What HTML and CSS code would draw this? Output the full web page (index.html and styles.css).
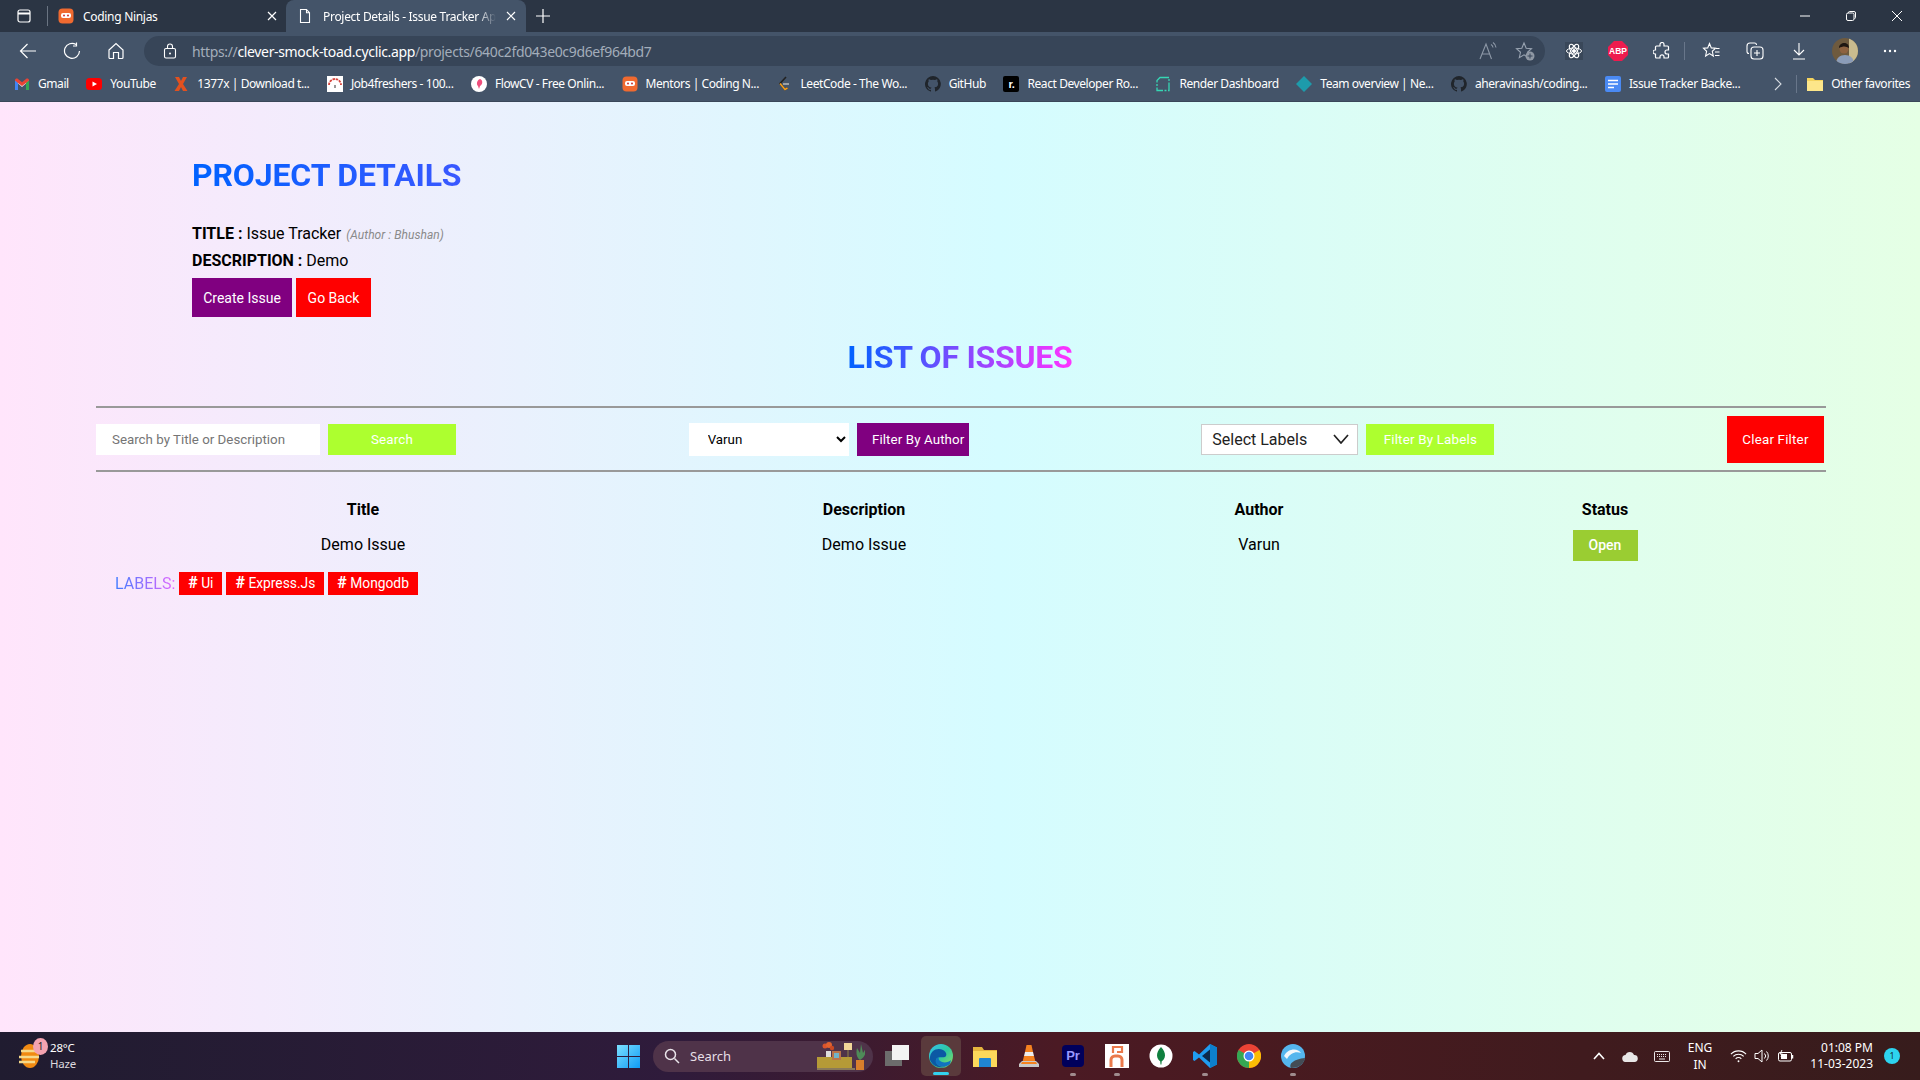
FILE: index.html
```html
<!DOCTYPE html>
<html lang="en">
<head>
<meta charset="utf-8">
<title>Project Details - Issue Tracker App</title>
<link rel="stylesheet" href="styles.css">
</head>
<body>
<header class="chrome">
  <div class="tabstrip">
    <div class="slot-side"><svg class="ic16" viewBox="0 0 16 16" fill="none" stroke="#fff" stroke-width="1.2"><rect x="2" y="2" width="12" height="12" rx="2"/><path d="M2 5.5h12" stroke-width="2"/></svg></div>
    <div class="tab-sep"></div>
    <div class="tab">
      <svg class="ic16" viewBox="0 0 16 16"><rect x="0.5" y="0.5" width="15" height="15" rx="4" fill="#f06a30"/><rect x="3" y="5" width="10" height="5" rx="2" fill="#fff"/><circle cx="6" cy="7.5" r="1" fill="#c33"/><circle cx="10" cy="7.5" r="1" fill="#c33"/></svg>
      <span class="tab-title">Coding Ninjas</span>
      <svg class="ic-x" viewBox="0 0 10 10" stroke="#fff" stroke-width="1.2"><path d="M1 1l8 8M9 1l-8 8"/></svg>
    </div>
    <div class="tab tab-active">
      <svg class="ic16" viewBox="0 0 16 16" fill="none" stroke="#fff" stroke-width="1.1"><path d="M3.5 1.5h6l3 3.2v9.8h-9zM9.5 1.5v3.2h3"/></svg>
      <span class="tab-title tab-fade">Project Details - Issue Tracker App</span>
      <svg class="ic-x" viewBox="0 0 10 10" stroke="#fff" stroke-width="1.2"><path d="M1 1l8 8M9 1l-8 8"/></svg>
    </div>
    <svg class="ic-plus" viewBox="0 0 14 14" stroke="#fff" stroke-width="1.2"><path d="M7 0v14M0 7h14"/></svg>
    <div class="win-controls">
      <svg class="ic-win" viewBox="0 0 12 12" stroke="#fff" stroke-width="1"><path d="M1 6h10"/></svg>
      <svg class="ic-win" viewBox="0 0 12 12" fill="none" stroke="#fff" stroke-width="1"><rect x="1.5" y="3" width="7.5" height="7.5" rx="1.5"/><path d="M3.5 3V2.5a1 1 0 0 1 1-1h4.500a1.500 1.500 0 0 1 1.500 1.500v4.500a1 1 0 0 1-1 1"/></svg>
      <svg class="ic-win" viewBox="0 0 12 12" stroke="#fff" stroke-width="1"><path d="M1 1l10 10M11 1L1 11"/></svg>
    </div>
  </div>
  <div class="toolbar">
    <div class="tool"><svg class="ic18" viewBox="0 0 18 18" fill="none" stroke="#fff" stroke-width="1.2"><path d="M17 9H1.500M8.500 2L1.500 9l7 7"/></svg></div>
    <div class="tool"><svg class="ic18" viewBox="0 0 18 18" fill="none" stroke="#fff" stroke-width="1.2"><path d="M13 2.500A7.500 7.500 0 1 0 16.500 9M13.500 0.500v3.500h-3.500"/></svg></div>
    <div class="tool"><svg class="ic18" viewBox="0 0 18 18" fill="none" stroke="#fff" stroke-width="1.2"><path d="M2 8l7-6.500L16 8v7.500a1 1 0 0 1-1 1h-3.500v-6h-5v6H3a1 1 0 0 1-1-1z"/></svg></div>
    <div class="address">
      <svg class="ic-lock" viewBox="0 0 14 16" fill="none" stroke="#fff" stroke-width="1.1"><rect x="1.500" y="5.500" width="11" height="9.500" rx="1.500"/><path d="M4.500 5.500V3.500a2.500 2.500 0 0 1 5 0v2"/><circle cx="7" cy="10.500" r="1" fill="#fff" stroke="none"/></svg>
      <div class="url"><span class="url-dim">https://</span><span class="url-host">clever-smock-toad.cyclic.app</span><span class="url-dim">/projects/640c2fd043e0c9d6ef964bd7</span></div>
      <div class="addr-actions">
        <svg class="ic20" viewBox="0 0 20 20" fill="none" stroke="#8d98a7" stroke-width="1.1"><path d="M2 18L8 3l5.500 15M4 13h7.500M13 3.500a4 4 0 0 1 2 3M15 1.500a7 7 0 0 1 3 5"/></svg>
        <svg class="ic20" viewBox="0 0 20 20"><path d="M9 2l2.200 5.200 5.300.5-4 3.600 1.200 5.300L9 13.800l-4.700 2.800 1.200-5.300-4-3.600 5.300-.5z" fill="none" stroke="#98a3b1" stroke-width="1.1"/><circle cx="15" cy="15" r="4.500" fill="#8f98a4"/><path d="M15 12.500v5M12.500 15h5" stroke="#374558" stroke-width="1"/></svg>
      </div>
    </div>
    <div class="tool tool-first"><svg class="ic18" viewBox="0 0 18 18" fill="none" stroke="#fff" stroke-width="1"><rect width="18" height="18" fill="#394759" stroke="none"/><ellipse cx="9" cy="9" rx="7.500" ry="3"/><ellipse cx="9" cy="9" rx="7.500" ry="3" transform="rotate(60 9 9)"/><ellipse cx="9" cy="9" rx="7.500" ry="3" transform="rotate(120 9 9)"/><circle cx="9" cy="9" r="1.500" fill="#fff"/></svg></div>
    <div class="tool"><div class="abp">ABP</div></div>
    <div class="tool"><svg class="ic18" viewBox="0 0 18 18" fill="none" stroke="#fff" stroke-width="1.2"><path d="M7 2.500a2 2 0 0 1 4 0V4h3.500a1 1 0 0 1 1 1v3H14a2 2 0 0 0 0 4h1.500v3a1 1 0 0 1-1 1H11v-1.200a2 2 0 0 0-4 0V16H3.500a1 1 0 0 1-1-1v-3H2a2 2 0 0 1 0-4h.5V5a1 1 0 0 1 1-1H7z"/></svg></div>
    <div class="tool-sep"></div>
    <div class="tool"><svg class="ic18" viewBox="0 0 18 18" fill="none" stroke="#fff" stroke-width="1.1"><path d="M7.500 1.500l1.800 4.400 4.200.4-3.200 3 1 4.700-3.800-2.400-3.900 2.400 1-4.700-3.100-3 4.200-.4zM14 6.500h3.500M13 10h4.500M13 13.500h4.500"/></svg></div>
    <div class="tool"><svg class="ic18" viewBox="0 0 18 18" fill="none" stroke="#fff" stroke-width="1.1"><path d="M3 11.500A2 2 0 0 1 1 9.500V4a3 3 0 0 1 3-3h4.500a2 2 0 0 1 2 2"/><rect x="5" y="5" width="12" height="12" rx="3"/><path d="M11 8v6M8 11h6"/></svg></div>
    <div class="tool"><svg class="ic18" viewBox="0 0 18 18" fill="none" stroke="#fff" stroke-width="1.1"><path d="M9 1v12M4 8l5 5 5-5M3 17h12"/></svg></div>
    <div class="tool tool-avatar"><svg class="avatar" viewBox="0 0 26 26"><defs><clipPath id="av"><circle cx="13" cy="13" r="13"/></clipPath></defs><g clip-path="url(#av)"><rect width="26" height="26" fill="#6e5a3e"/><rect x="17" width="9" height="26" fill="#c9bb8e"/><path d="M4 26c0-6 4-9 9-9s9 3 9 9z" fill="#8b9cb8"/><circle cx="12" cy="11" r="4.500" fill="#8e6240"/><path d="M7 10c0-6 10-7 10 0-3-2-6-2-10 0z" fill="#1f1712"/></g></svg></div>
    <div class="tool tool-dots"><svg class="ic-dots" viewBox="0 0 14 4" fill="#fff"><circle cx="2" cy="2" r="1.200"/><circle cx="7" cy="2" r="1.200"/><circle cx="12" cy="2" r="1.200"/></svg></div>
  </div>
  <nav class="bookmarks">
    <div class="bm"><svg class="ic16" viewBox="0 0 16 16"><path d="M1 14V4l7 5 7-5v10h-3V7.500L8 11 4 7.500V14z" fill="#e9e9e9"/><path d="M1 14V4l3 2.500V14z" fill="#4285f4"/><path d="M12 14V6.500L15 4v10z" fill="#34a853"/><path d="M1 4.500C1 2.500 3 2 4 3l4 3.200L12 3c1-1 3-.5 3 1.500L12 7 8 10 4 7z" fill="#ea4335"/></svg><span>Gmail</span></div>
    <div class="bm"><svg class="ic16" viewBox="0 0 16 16"><rect y="2" width="16" height="12" rx="3.500" fill="#f00"/><path d="M6.500 5.500L11 8l-4.500 2.500z" fill="#fff"/></svg><span>YouTube</span></div>
    <div class="bm"><svg class="ic16" viewBox="0 0 16 16"><path d="M2 1h4l2 4 2-4h4l-4 7 4.500 7H10L8 11l-2 4H1.500L6 8z" fill="#e2511f"/></svg><span>1377x | Download t...</span></div>
    <div class="bm"><svg class="ic16" viewBox="0 0 16 16"><rect width="16" height="16" fill="#fff"/><path d="M2 9a6 6 0 0 1 12 0" fill="none" stroke="#d6423b" stroke-width="1.800" stroke-dasharray="2.500 .8"/><path d="M8 9v3" stroke="#555" stroke-width="1.200"/></svg><span>Job4freshers - 100...</span></div>
    <div class="bm"><svg class="ic16" viewBox="0 0 16 16"><circle cx="8" cy="8" r="8" fill="#fff"/><path d="M9 3c3 1 3 5 0 7l-1 3-1-3C5 8 6 4 9 3z" fill="#ef4f7d"/></svg><span>FlowCV - Free Onlin...</span></div>
    <div class="bm"><svg class="ic16" viewBox="0 0 16 16"><rect x="0.500" y="0.500" width="15" height="15" rx="4" fill="#f06a30"/><rect x="3" y="5" width="10" height="5" rx="2" fill="#fff"/><circle cx="6" cy="7.500" r="1" fill="#c33"/><circle cx="10" cy="7.500" r="1" fill="#c33"/></svg><span>Mentors | Coding N...</span></div>
    <div class="bm"><svg class="ic16" viewBox="0 0 16 16" fill="none" stroke-width="1.600"><path d="M10 1L4 7.500l5 6 2.500-1.500" stroke="#222"/><path d="M4 7.500l5 6 2.500-1.500" stroke="#f89f1b"/><path d="M7 8h6" stroke="#b3b3b3"/></svg><span>LeetCode - The Wo...</span></div>
    <div class="bm"><svg class="ic16" viewBox="0 0 16 16"><path fill="#20252b" d="M8 0a8 8 0 0 0-2.500 15.600c.4.100.5-.2.500-.4v-1.400c-2.200.500-2.700-1-2.700-1-.4-.9-.9-1.200-.9-1.200-.7-.5.100-.5.100-.5.800.100 1.200.8 1.200.8.700 1.200 1.900.9 2.300.7.100-.5.300-.9.500-1.100-1.800-.2-3.600-.9-3.600-4 0-.9.300-1.600.8-2.100-.1-.2-.4-1 .1-2.100 0 0 .7-.2 2.200.8a7.600 7.600 0 0 1 4 0c1.500-1 2.200-.8 2.200-.8.400 1.100.2 1.900.1 2.100.5.600.8 1.300.8 2.100 0 3.100-1.900 3.700-3.700 3.900.3.300.6.800.6 1.500v2.200c0 .2.100.5.600.4A8 8 0 0 0 8 0z"/></svg><span>GitHub</span></div>
    <div class="bm"><div class="rr"><span class="rr-text">r.</span></div><span>React Developer Ro...</span></div>
    <div class="bm"><svg class="ic16" viewBox="0 0 16 16" fill="none" stroke="#36d6b4" stroke-width="1.300"><path d="M5 1.500h9v13H2V4.500z" stroke-dasharray="9 1.500 2 1.500"/></svg><span>Render Dashboard</span></div>
    <div class="bm"><svg class="ic16" viewBox="0 0 16 16"><path d="M8 0l8 8-8 8-8-8z" fill="#1d9bab"/></svg><span>Team overview | Ne...</span></div>
    <div class="bm"><svg class="ic16" viewBox="0 0 16 16"><path fill="#20252b" d="M8 0a8 8 0 0 0-2.500 15.600c.4.100.5-.2.500-.4v-1.400c-2.200.500-2.700-1-2.700-1-.4-.9-.9-1.200-.9-1.200-.7-.5.100-.5.100-.5.800.100 1.200.8 1.200.8.700 1.200 1.900.9 2.300.7.100-.5.300-.9.500-1.100-1.800-.2-3.600-.9-3.600-4 0-.9.300-1.600.8-2.100-.1-.2-.4-1 .1-2.100 0 0 .7-.2 2.200.8a7.600 7.600 0 0 1 4 0c1.500-1 2.200-.8 2.200-.8.400 1.100.2 1.900.1 2.100.5.600.8 1.300.8 2.100 0 3.100-1.900 3.700-3.700 3.900.3.300.6.800.6 1.500v2.200c0 .2.100.5.600.4A8 8 0 0 0 8 0z"/></svg><span>aheravinash/coding...</span></div>
    <div class="bm"><svg class="ic16" viewBox="0 0 16 16"><rect width="16" height="16" rx="2" fill="#4a8af4"/><path d="M3 4.500h10M3 8h10M3 11.500h6" stroke="#fff" stroke-width="1.600"/></svg><span>Issue Tracker Backe...</span></div>
    <svg class="ic-more" viewBox="0 0 8 14" fill="none" stroke="#d8dde3" stroke-width="1.100"><path d="M1 1l6 6-6 6"/></svg>
    <div class="bm-sep"></div>
    <div class="bm bm-other"><svg class="ic18" viewBox="0 0 18 18"><path d="M1 3h6l2 2h8v11H1z" fill="#f4d35e"/><path d="M1 6h16v10H1z" fill="#fde68a"/></svg><span>Other favorites</span></div>
  </nav>
</header>

<main class="page">
  <section class="details">
    <h1 class="grad-title">PROJECT DETAILS</h1>
    <p class="meta"><strong>TITLE :</strong> Issue Tracker <em class="byline">(Author : Bhushan)</em></p>
    <p class="meta"><strong>DESCRIPTION :</strong> Demo</p>
    <div class="detail-actions">
      <button class="btn btn-purple btn-lg">Create Issue</button>
      <button class="btn btn-red btn-lg btn-back">Go Back</button>
    </div>
  </section>
  <div class="list-head"><h2 class="list-title">LIST OF ISSUES</h2></div>
  <div class="filters">
    <div class="group">
      <input class="search-input" type="text" placeholder="Search by Title or Description">
      <button class="btn btn-lime btn-search">Search</button>
    </div>
    <div class="group">
      <select class="author-select"><option>Varun</option></select>
      <button class="btn btn-purple btn-author">Filter By Author</button>
    </div>
    <div class="group">
      <div class="label-select"><span>Select Labels</span><svg class="label-chev" viewBox="0 0 16 10" fill="none" stroke="#222" stroke-width="1.700"><path d="M1 1l7 8 7-8"/></svg></div>
      <button class="btn btn-lime btn-labels">Filter By Labels</button>
    </div>
    <button class="btn btn-red btn-clear">Clear Filter</button>
  </div>
  <div class="issues">
    <div class="issue-grid">
      <div class="th">Title</div><div class="th">Description</div><div class="th">Author</div><div class="th">Status</div>
      <div class="td">Demo Issue</div><div class="td">Demo Issue</div><div class="td">Varun</div><div class="td"><span class="status">Open</span></div>
    </div>
    <div class="labels">
      <span class="labels-name">LABELS:</span>
      <span class="tag"><b class="hash">#</b> Ui</span>
      <span class="tag"><b class="hash">#</b> Express.Js</span>
      <span class="tag"><b class="hash">#</b> Mongodb</span>
    </div>
  </div>
</main>

<footer class="taskbar">
  <div class="tb-left">
    <div class="weather-icon">
      <svg class="ic-sun" viewBox="0 0 24 28"><ellipse cx="12" cy="14" rx="9" ry="12" fill="#f08a12"/><path d="M3 9h16M1 15h20M1 20h16" stroke="#f5d98a" stroke-width="2.400"/></svg>
      <span class="weather-badge">1</span>
    </div>
    <div class="weather-text"><div>28°C</div><div class="haze">Haze</div></div>
  </div>
  <div class="tb-slot"><svg class="ic-start" viewBox="0 0 24 24"><defs><linearGradient id="wg" x1="0" y1="0" x2="1" y2="1"><stop offset="0" stop-color="#7be0ff"/><stop offset="1" stop-color="#0f9bf5"/></linearGradient></defs><path d="M0 0h11.500v11.500H0zM12.500 0H24v11.500H12.500zM0 12.500h11.500V24H0zM12.500 12.500H24V24H12.500z" fill="url(#wg)"/></svg></div>
  <div class="tb-search">
    <svg class="ic16" viewBox="0 0 16 16" fill="none" stroke="#e9e4ea" stroke-width="1.500"><circle cx="6.500" cy="6.500" r="5"/><path d="M10.500 10.500l4.500 4.500"/></svg>
    <span>Search</span>
    <svg class="tb-deco" viewBox="0 0 48 28"><rect x="0" y="15" width="35" height="11" fill="#b59a37"/><path d="M0 26h38v2H0z" fill="#8a7a5a"/><path d="M9 15v-6h5v6z" fill="#ddd"/><circle cx="8" cy="4" r="2.500" fill="#d9532c"/><circle cx="12" cy="3" r="3" fill="#e0612e"/><circle cx="15" cy="6" r="2.200" fill="#c94a24"/><rect x="15" y="9" width="9" height="9" fill="#b9744a"/><rect x="17" y="11" width="5" height="5" fill="#6fb3c9"/><path d="M27 1h8v7h-8z" fill="#f1d798"/><path d="M31 8v7" stroke="#7a6a4a" stroke-width="1.500"/><path d="M39 18h8v10h-8z" fill="#d97f2c"/><path d="M43 18c-4-3-4-8-3-12l3 5 1-9 2 9 3-5c0 5-1 9-6 12z" fill="#4e8b58"/></svg>
  </div>
  <div class="tb-slot"><svg class="ic-tb" viewBox="0 0 24 24"><rect x="0" y="7" width="17" height="15" fill="#6c6c6c"/><rect x="7" y="1" width="17" height="15" fill="#f3f3f3"/></svg></div>
  <div class="tb-slot tb-active">
    <svg class="ic-tb" viewBox="0 0 24 24"><defs><linearGradient id="eg" x1="0" y1="0" x2="1" y2="1"><stop offset="0" stop-color="#35c1f1"/><stop offset=".5" stop-color="#2dc7a0"/><stop offset="1" stop-color="#8ee35a"/></linearGradient></defs><circle cx="12" cy="12" r="12" fill="url(#eg)"/><path d="M1 16C0 6 9 3 14 6c4 2 4 6 2 7-3 1-8-1-9 3s5 8 11 6A12 12 0 0 1 1 16z" fill="#0c59a4"/><path d="M22 16c-2 2-6 3-9 2-3-1-4-3-3-5-3 1-4 4-3 6 2 4 9 5 14 1z" fill="#1173c0"/></svg>
    <i class="run run-active"></i>
  </div>
  <div class="tb-slot"><svg class="ic-tb" viewBox="0 0 24 24"><path d="M0 3h9l2 3h13v17H0z" fill="#e5b53e"/><path d="M0 7h24v16H0z" fill="#fbd85b"/><path d="M7 14h10a1 1 0 0 1 1 1v8H6v-8a1 1 0 0 1 1-1z" fill="#1f85d3"/></svg></div>
  <div class="tb-slot"><svg class="ic-tb" viewBox="0 0 24 24"><path d="M9.500 1h5l1.500 7H8z" fill="#f58220"/><path d="M8 8h8l1 4H7z" fill="#eee"/><path d="M7 12h10l1.500 6h-13z" fill="#f58220"/><path d="M2 20l3-3h14l3 3v3H2z" fill="#c9c9c9"/><path d="M5 18h14l1 2H4z" fill="#f58220"/></svg></div>
  <div class="tb-slot"><div class="pr">Pr</div><i class="run"></i></div>
  <div class="tb-slot"><svg class="ic-tb" viewBox="0 0 24 24"><rect width="24" height="24" fill="#fff"/><path d="M8 9V3h9v5h-5" fill="none" stroke="#ea7a4c" stroke-width="2.200"/><path d="M6 23v-7a4 4 0 0 1 4-4h3a4 4 0 0 1 4 4v7" fill="none" stroke="#ea7a4c" stroke-width="3"/></svg><i class="run"></i></div>
  <div class="tb-slot"><svg class="ic-tb" viewBox="0 0 24 24"><circle cx="12" cy="12" r="11.500" fill="#fff"/><path d="M12 3c3 3 4 6 4 8.500 0 3-2 5-3.300 5.700l-.3 3.300h-.9l-.3-3.300C10 16.500 8 14.500 8 11.500 8 9 9 6 12 3z" fill="#10803f"/></svg></div>
  <div class="tb-slot"><svg class="ic-tb" viewBox="0 0 24 24"><path d="M17 0l7 3.500v17L17 24 6 13.500 1.500 17 0 16V8l1.500-1L6 10.500z" fill="#1f9cf0"/><path d="M17 5.500v13L9 12z" fill="#0c2a4c"/><path d="M17 0l7 3.500v17L17 24z" fill="#0d7fcc"/></svg><i class="run"></i></div>
  <div class="tb-slot"><svg class="ic-tb" viewBox="0 0 24 24"><circle cx="12" cy="12" r="12" fill="#ea4335"/><path d="M12 12L22.400 6A12 12 0 0 1 12 24z" fill="#fbbc05"/><path d="M12 12L12 24A12 12 0 0 1 1.600 6z" fill="#34a853"/><circle cx="12" cy="12" r="5.500" fill="#fff"/><circle cx="12" cy="12" r="4.300" fill="#4285f4"/></svg></div>
  <div class="tb-slot"><svg class="ic-tb" viewBox="0 0 24 24"><circle cx="12" cy="12" r="12" fill="#55b6ee"/><path d="M3 12c4-8 14-8 17-3-5-2-11 0-14 6z" fill="#f2f7fb"/><path d="M10 24c-3-4 3-9 14-10-1 6-6 10-14 10z" fill="#444c55"/></svg><i class="run"></i></div>
  <div class="tray">
    <svg class="ic-chev" viewBox="0 0 12 8" fill="none" stroke="#fff" stroke-width="1.600"><path d="M1 7l5-5.500L11 7"/></svg>
    <svg class="ic-cloud" viewBox="0 0 16 11"><path d="M4 11a3.500 3.500 0 0 1-.5-7A4.500 4.500 0 0 1 12 4a3.500 3.500 0 0 1 .5 7z" fill="#e9e7e7"/></svg>
    <svg class="ic-kb" viewBox="0 0 16 11" fill="none" stroke="#fff" stroke-width=".9"><rect x=".5" y=".5" width="15" height="10" rx="1"/><path d="M3 3.500h10M3 5.500h10" stroke-dasharray="1 1"/><path d="M5 8h6"/></svg>
    <div class="lang"><div>ENG</div><div>IN</div></div>
    <svg class="ic-wifi" viewBox="0 0 18 14" fill="none" stroke="#fff" stroke-width="1.200"><path d="M1 5a11 11 0 0 1 16 0M3.500 7.500a7.500 7.500 0 0 1 11 0M6 10a4 4 0 0 1 6 0"/><circle cx="9" cy="12.500" r="1" fill="#fff" stroke="none"/></svg>
    <svg class="ic-vol" viewBox="0 0 16 14" fill="none" stroke="#fff" stroke-width="1"><path d="M1 4.500h3L8 1v12L4 9.500H1zM10.500 4.500a3.500 3.500 0 0 1 0 5M12.500 2.500a6.500 6.500 0 0 1 0 9"/></svg>
    <svg class="ic-bat" viewBox="0 0 16 12" fill="none" stroke="#fff" stroke-width="1"><rect x=".5" y="2.500" width="13" height="8.500" rx="1.500"/><path d="M14.500 5v3.500" stroke-width="1.500"/><path d="M3 4h6v5H3z" fill="#fff" stroke="none"/><path d="M4 0L2 4h2.500L3 7" stroke-width="1"/></svg>
    <div class="clock"><div>01:08 PM</div><div>11-03-2023</div></div>
    <div class="notif">1</div>
  </div>
</footer>
</body>
</html>
```
FILE: styles.css
```css
* { box-sizing: border-box; }
html, body { margin: 0; height: 100%; }
body { width: 1920px; height: 1080px; overflow: hidden; display: flex; flex-direction: column; font-family: Roboto, "Liberation Sans", sans-serif; }
svg { display: block; flex: none; }

/* browser chrome */
.chrome { flex: none; color: #fff; font-family: "Noto Sans", Roboto, sans-serif; font-size: 12px; }
.ic16 { width: 16px; height: 16px; }
.ic18 { width: 18px; height: 18px; }
.ic20 { width: 20px; height: 20px; }
.tabstrip { height: 32px; background: #2b3544; display: flex; align-items: flex-end; }
.slot-side { width: 47px; height: 32px; display: flex; align-items: center; justify-content: center; }
.tab-sep { width: 1px; height: 20px; background: #6a7482; margin-bottom: 6px; margin-right: 10px; }
.tab { width: 228px; height: 32px; display: flex; align-items: center; padding: 0 9px 0 0; gap: 9px; letter-spacing: -0.3px; }
.tab-title { flex: 1; white-space: nowrap; overflow: hidden; }
.tab-active { width: 240px; margin-left: 0; padding: 0 10px 0 11px; background: #445469; border-radius: 8px 8px 0 0; gap: 10px; }
.tab-fade { -webkit-mask-image: linear-gradient(to left, transparent, #000 18px); mask-image: linear-gradient(to left, transparent, #000 18px); }
.ic-x { width: 10px; height: 10px; }
.ic-plus { width: 14px; height: 14px; margin: 0 0 9px 10px; }
.win-controls { margin-left: auto; height: 32px; display: flex; align-items: center; gap: 34px; padding-right: 17px; }
.ic-win { width: 12px; height: 12px; }

.toolbar { height: 34px; background: #445469; display: flex; align-items: flex-end; padding-left: 6px; }
.tool { width: 44px; height: 30px; display: flex; align-items: center; justify-content: center; }
.tool-first { margin-left: 7px; }
.tool-sep { width: 1px; height: 18px; background: #68768a; margin: 0 4px 6px 0; }
.tool-avatar { margin-left: 2px; }
.tool-dots { margin-left: 1px; }
.address { width: 1401px; height: 30px; margin: 0 0 0 6px; background: #374558; border-radius: 15px; display: flex; align-items: center; padding: 0 10px 0 19px; }
.ic-lock { width: 14px; height: 16px; }
.url { margin-left: 15px; font-size: 14px; letter-spacing: -0.35px; white-space: nowrap; line-height: 19px; }
.url-dim { color: #a3adba; }
.url-host { color: #fff; }
.addr-actions { margin-left: auto; display: flex; gap: 17px; }
.abp { width: 20px; height: 20px; background: #ee1b4e; clip-path: polygon(30% 0, 70% 0, 100% 30%, 100% 70%, 70% 100%, 30% 100%, 0 70%, 0 30%); font: bold 8.5px/20px "Liberation Sans", sans-serif; text-align: center; color: #fff; }
.avatar { width: 26px; height: 26px; }
.ic-dots { width: 14px; height: 4px; }

.bookmarks { height: 36px; background: #445469; display: flex; align-items: center; padding: 0 10px 0 14px; gap: 17.500px; border-bottom: 1px solid #3a4759; letter-spacing: -0.42px; white-space: nowrap; }
.bm { display: flex; align-items: center; gap: 8px; }
.rr { width: 16px; height: 16px; background: #000; border-radius: 2px; display: flex; align-items: center; justify-content: center; }
.rr-text { font: bold 11px/16px "Liberation Sans", sans-serif; color: #fff; }
.ic-more { width: 8px; height: 14px; margin-left: auto; }
.bm-sep { width: 1px; height: 18px; background: #68768a; margin-left: -4px; }
.bm-other { margin-left: -8px; gap: 7px; }

/* page */
.page { flex: 1; min-height: 0; padding: 0 94px 0 96px; background: linear-gradient(90deg, #ffe5fb 0%, #d5fcff 52%, #e5ffe5 100%); color: #000; }
.details { padding: 54px 0 0 96px; }
.grad-title { margin: 0; width: 1200px; font-size: 32px; line-height: 38px; font-weight: 700; letter-spacing: -0.15px; background: linear-gradient(90deg, #0062ff, #ff33ff); background-clip: text; -webkit-background-clip: text; color: transparent; }
.meta { margin: 0; font-size: 16px; line-height: 27px; }
.grad-title + .meta { margin-top: 26px; }
.byline { font-size: 12px; line-height: 1; color: #8a8a8a; margin-left: 1px; letter-spacing: 0.05px; }
.detail-actions { display: flex; gap: 4px; margin-top: 4px; }
.btn { border: 0; color: #fff; font-family: Roboto, sans-serif; font-size: 13.33px; font-weight: 400; letter-spacing: 0.2px; padding: 0; cursor: pointer; }
.btn-lg { height: 39px; }
.btn-purple { background: #800080; }
.btn-red { background: #f00; }
.btn-lime { background: #adff2f; }
.detail-actions .btn-purple { width: 100px; font-size: 14px; letter-spacing: 0; }
.btn-back { width: 75px; font-size: 14px; letter-spacing: 0; }
.list-head { text-align: center; margin-top: 21px; height: 38px; padding-right: 2px; }
.list-title { display: inline-block; margin: 0; font-size: 32px; line-height: 38px; font-weight: 700; letter-spacing: -0.25px; background: linear-gradient(90deg, #0062ff, #ff33ff); background-clip: text; -webkit-background-clip: text; color: transparent; }
.filters { margin-top: 30px; height: 66px; border-top: 2px solid #999; border-bottom: 2px solid #999; display: flex; justify-content: space-between; align-items: center; padding-right: 2px; }
.group { display: flex; align-items: center; gap: 8px; }
.search-input { width: 224px; height: 31px; border: 0; padding: 0 16px; background: #fff; font: 13.33px Roboto, sans-serif; outline: 0; }
.search-input::placeholder { color: #757575; }
.btn-search { width: 128px; height: 31px; }
.author-select { width: 160px; height: 33px; border: 0; background: #fff; padding: 0 15px; font: 400 13.33px Roboto, sans-serif; color: #000; }
.btn-author { width: 112px; height: 33px; padding-left: 11px; letter-spacing: 0.1px; white-space: nowrap; }
.label-select { width: 157px; height: 31px; border: 1px solid #ccc; background: #fff; display: flex; align-items: center; justify-content: space-between; padding: 0 8px 0 10px; font-size: 16px; color: #222; }
.label-chev { width: 16px; height: 10px; }
.btn-labels { width: 128px; height: 31px; }
.btn-clear { width: 97px; height: 47px; }
.issue-grid { display: grid; grid-template-columns: 534px 468px 322px 370px; margin-top: 20px; text-align: center; }
.th { font-size: 16px; font-weight: 700; line-height: 35px; }
.td { font-size: 16px; height: 36px; line-height: 38px; display: flex; align-items: center; justify-content: center; }
.status { width: 65px; height: 31px; background: #9acd32; color: #fff; font-size: 14px; font-weight: 500; line-height: 31px; }
.labels { display: flex; align-items: center; gap: 4px; margin: 9px 0 0 19px; height: 23px; }
.labels-name { font-size: 16px; background: linear-gradient(90deg, #3f7bff, #e366ff); background-clip: text; -webkit-background-clip: text; color: transparent; }
.tag { height: 23px; padding: 0 9px; background: #f00; color: #fff; font-size: 13.8px; font-weight: 400; line-height: 23px; white-space: nowrap; }
.hash { font-weight: 700; font-size: 16px; line-height: 20px; }

/* taskbar */
.taskbar { flex: none; height: 48px; display: flex; align-items: center; color: #fff; font-family: "Noto Sans", Roboto, sans-serif; font-size: 12px; background: linear-gradient(90deg, #201c30 0%, #2f1b3b 35%, #4b1a24 55%, #491a20 65%, #371c1c 100%); }
.tb-left { width: 606px; display: flex; align-items: center; padding-left: 18px; gap: 8px; }
.weather-icon { position: relative; width: 24px; height: 28px; }
.ic-sun { width: 24px; height: 28px; }
.weather-badge { position: absolute; top: -4px; right: -6px; width: 15px; height: 17px; border-radius: 50%; background: #f4a3b0; color: #222; font-size: 10px; line-height: 17px; text-align: center; }
.weather-text { line-height: 16px; letter-spacing: -0.2px; font-size: 11.5px; }
.haze { color: #dcd8de; }
.tb-slot { position: relative; width: 44px; height: 40px; display: flex; align-items: center; justify-content: center; }
.ic-tb { width: 24px; height: 24px; }
.ic-start { width: 23px; height: 23px; }
.tb-search { width: 220px; height: 31px; margin: 0 2px 0 3px; padding: 0 8px 0 11px; border-radius: 16px; background: #4f3349; display: flex; align-items: center; gap: 10px; font-size: 13px; color: #e6dfe6; }
.tb-deco { width: 48px; height: 28px; margin-left: auto; }
.tb-active { background: #5a3a3c; border-radius: 5px; width: 40px; margin: 0 2px; }
.run { position: absolute; left: 50%; bottom: 0; width: 6px; height: 3px; margin-left: -3px; border-radius: 2px; background: #a08c8e; }
.run-active { width: 16px; margin-left: -8px; background: #33d2ef; bottom: 1px; }
.pr { width: 22px; height: 22px; background: #00005b; border-radius: 4px; color: #9999ff; font: bold 13px/22px "Liberation Sans", sans-serif; text-align: center; }
.tray { margin-left: auto; display: flex; align-items: center; padding-right: 20px; }
.ic-chev { width: 12px; height: 8px; }
.ic-cloud { width: 16px; height: 11px; margin-left: 17px; }
.ic-kb { width: 16px; height: 11px; margin-left: 16px; }
.lang { width: 40px; margin-left: 10px; text-align: center; font-size: 12px; line-height: 17px; }
.ic-wifi { width: 17px; height: 14px; margin-left: 10px; }
.ic-vol { width: 16px; height: 14px; margin-left: 7px; }
.ic-bat { width: 16px; height: 12px; margin-left: 8px; }
.clock { width: 79px; text-align: right; font-size: 12px; line-height: 16px; white-space: nowrap; }
.notif { width: 16px; height: 16px; margin-left: 11px; border-radius: 50%; background: #2dd4f0; color: #16323c; font-size: 9px; line-height: 16px; text-align: center; }
```
